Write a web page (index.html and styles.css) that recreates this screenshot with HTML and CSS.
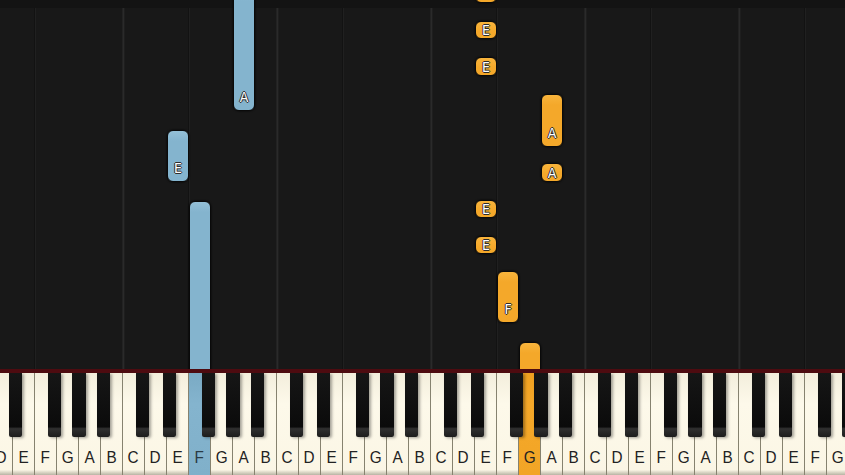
FILE: index.html
```html
<!DOCTYPE html>
<html lang="en">
<head>
    <meta charset="UTF-8">
    <meta name="viewport" content="width=device-width, initial-scale=1.0">
    <title>Piano Roll</title>

    <link rel="stylesheet" href="styles.css">
</head>
<body>

    <div class="screen">
        <div class="roll">
            <!-- left hand -->
            <div class="note blue" style="left:233px; top:-10px; height:121px;">A</div>
            <div class="note blue" style="left:167px; top:130px; height:52px;">E</div>
            <div class="note blue" style="left:189px; top:201px; height:180px;"></div>

            <!-- right hand -->
            <div class="note orange short" style="left:475px; top:-15px; height:18px;"></div>
            <div class="note orange short" style="left:475px; top:21px; height:18px;">E</div>
            <div class="note orange short" style="left:475px; top:57px; height:19px;">E</div>
            <div class="note orange" style="left:541px; top:94px; height:53px;">A</div>
            <div class="note orange short" style="left:541px; top:163px; height:19px;">A</div>
            <div class="note orange short" style="left:475px; top:200px; height:18px;">E</div>
            <div class="note orange short" style="left:475px; top:236px; height:18px;">E</div>
            <div class="note orange" style="left:497px; top:271px; height:52px;">F</div>
            <div class="note orange" style="left:519px; top:342px; height:40px;"></div>
        </div>

        <div class="keyboard">
            <div class="white-keys"></div>
        </div>
    </div>

    <script>
        const names = ['C', 'D', 'E', 'F', 'G', 'A', 'B'];
        const sharpOffset = { C: -2.5, D: 2.5, F: -2.5, G: 0, A: 2.5 };
        const pressed = { 9: 'blue', 24: 'orange' };
        const keyWidth = 22;
        const start = -9;

        const keyboard = document.querySelector('.keyboard');
        const whiteRow = document.querySelector('.white-keys');

        for (let i = 0; i < 40; i++) {
            const name = names[(i + 1) % 7];

            const key = document.createElement('div');
            key.className = 'white' + (pressed[i] ? ' ' + pressed[i] : '');
            key.innerHTML = '<span>' + name + '</span>';
            whiteRow.appendChild(key);

            if (name in sharpOffset) {
                const black = document.createElement('div');
                black.className = 'black';
                black.style.left = (start + keyWidth * (i + 1) - 6.75 + sharpOffset[name]) + 'px';
                keyboard.appendChild(black);
            }
        }
    </script>

</body>
</html>
```

FILE: styles.css
```css
* {
    box-sizing: border-box;
    margin: 0;
    padding: 0;
}
body {
    background: #181818;
    overflow: hidden;
    font-family: "Liberation Sans", Arial, sans-serif;
}
.screen {
    width: 845px;
    height: 475px;
    display: flex;
    flex-direction: column;
    overflow: hidden;
}
.roll {
    position: relative;
    height: 369px;
    flex: 0 0 369px;
    overflow: hidden;
    background-color: #181818;
    background-image:
        linear-gradient(to bottom, #131313 0 8px, transparent 8px),
        linear-gradient(to right, #222 0 1px, #2a2a2a 1px 2px, #1e1e1e 2px 3px, transparent 3px),
        linear-gradient(to right, #121212 0 1px, #202020 1px 2px, transparent 2px);
    background-size: 100% 100%, 154px 100%, 154px 100%;
    background-position: 0 0, 122px 0, 34px 0;
    background-repeat: no-repeat, repeat-x, repeat-x;
}
.note {
    position: absolute;
    width: 22px;
    border: 1px solid #0a0a0a;
    border-radius: 6px;
    box-shadow: 0 0 2px #000;
    display: flex;
    justify-content: center;
    align-items: flex-end;
    padding-bottom: 5px;
    font-family: "DejaVu Sans Condensed", "DejaVu Sans", sans-serif;
    font-size: 14px;
    line-height: 16px;
    color: #fff;
    text-shadow: 1px 0 0 #2b2b2b, -1px 0 0 #2b2b2b, 0 1px 0 #2b2b2b, 0 -1px 0 #2b2b2b;
}
.note.short {
    align-items: center;
    padding-bottom: 0;
}
.note.blue {
    background: linear-gradient(to bottom, #94c0d7, #84b4ce 10px);
}
.note.orange {
    background: linear-gradient(to bottom, #f8b43c, #f4a82a 10px);
}
.keyboard {
    position: relative;
    flex: 1;
    border-top: 4px solid #4e0b10;
    overflow: hidden;
}
.white-keys {
    display: flex;
    margin-left: -9px;
    height: 100%;
}
.white {
    flex: 0 0 22px;
    height: 100%;
    background: linear-gradient(to bottom, #f3eedc, #fdf9ea 30%, #fbf6e5 95%, #b8b4a4);
    border-right: 1px solid #86826f;
    display: flex;
    justify-content: center;
    align-items: flex-end;
    padding-bottom: 7px;
    font-size: 17px;
    line-height: 20px;
    color: #222;
}
.white span {
    display: inline-block;
    transform: scaleX(0.9);
}
.white.blue {
    background: linear-gradient(to bottom, #7aaac4, #84b4ce 30%, #80b0ca);
    color: #2a3a44;
}
.white.orange {
    background: linear-gradient(to bottom, #f0a020, #f5a829 30%, #f2a526);
}
.black {
    position: absolute;
    top: 0;
    width: 13.5px;
    height: 64px;
    background: linear-gradient(to bottom, #161616, #0b0b0b 84%, #303030 87%, #1c1c1c 100%);
    border-radius: 0 0 2px 2px;
    box-shadow: 2px 1px 3px rgba(0, 0, 0, 0.35);
}
```
